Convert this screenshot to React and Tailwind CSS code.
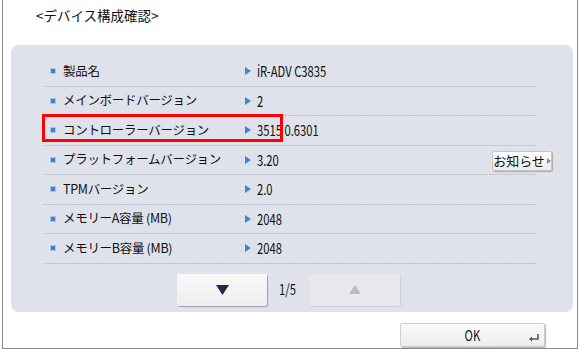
import React from 'react'

const ROWS = [
  { label: '製品名', value: 'iR-ADV C3835' },
  { label: 'メインボードバージョン', value: '2' },
  { label: 'コントローラーバージョン', value: '3515 0.6301' },
  { label: 'プラットフォームバージョン', value: '3.20', notice: true },
  { label: 'TPMバージョン', value: '2.0' },
  { label: 'メモリーA容量 (MB)', value: '2048' },
  { label: 'メモリーB容量 (MB)', value: '2048' },
]

const font = "font-['Noto_Sans_CJK_JP','Noto_Sans',sans-serif]"

// condensed latin text, like the panel's narrow face
const Narrow = ({ children, className = '' }) => (
  <span className={`inline-block origin-left scale-x-[0.75] whitespace-pre ${className}`}>{children}</span>
)

const InfoRow = ({ label, value, notice }) => (
  <div className="flex items-center h-[28.5px] box-content bg-[linear-gradient(to_right,#8f949c_1px,transparent_1px)] bg-[length:3px_1px] bg-repeat-x bg-bottom pb-px">
    <div className="flex items-center w-[202px] pl-[8px]">
      <span className="w-[4px] h-[4px] bg-[#3d7fd1] shadow-[0_0_0_1px_#a9c6ea]" />
      <span className="ml-[8px] text-[12.5px] tracking-[-0.3px] text-[#111]">{label}</span>
    </div>
    <svg width="6" height="8" viewBox="0 0 6 8" className="shrink-0">
      <path d="M0 0 L6 4 L0 8 Z" fill="#3e86d3" />
    </svg>
    <Narrow className="ml-[6px] text-[15px] leading-[18px] text-[#111]">{value}</Narrow>
    {notice && (
      <button className="ml-auto -mr-[15px] mt-[2px] h-[20px] w-[60px] flex items-center justify-center gap-[2px] bg-gradient-to-b from-[#ffffff] to-[#ececec] border border-[#c4c4c4] rounded-[2px] shadow-[1px_1px_1px_rgba(0,0,0,0.25)] text-[13px] leading-[16px] text-[#111]">
        お知らせ
        <svg width="4" height="6" viewBox="0 0 4 6">
          <path d="M0 0 L4 3 L0 6 Z" fill="#8a8a8a" />
        </svg>
      </button>
    )}
  </div>
)

export default function App() {
  return (
    <div className={`relative w-[578px] h-[352px] bg-white ${font}`}>
      <div className="ml-[2px] w-[576px] h-[349px] border-l border-r border-b border-[#8c8c8c] flex flex-col">
        <div className="pl-[33px] pt-[7px] h-[45px] text-[13.5px] leading-[16px] text-[#111]">
          &lt;デバイス構成確認&gt;
        </div>
        <div className="ml-[8px] mr-[4px] h-[267px] rounded-[8px] bg-[#dfe2ea] pt-[12px] px-[32px]">
          <div className="w-[494px]">
            {ROWS.map(r => (
              <InfoRow key={r.label} {...r} />
            ))}
          </div>
          <div className="flex items-center mt-[10px] ml-[134px]">
            <button className="w-[90px] h-[32px] flex items-center justify-center bg-gradient-to-b from-[#f8f8f8] to-[#ededed] rounded-[2px] shadow-[1px_1px_1px_rgba(0,0,0,0.3)]">
              <svg width="13" height="10" viewBox="0 0 13 10">
                <path d="M0 0 L13 0 L6.5 10 Z" fill="#1e2a45" />
              </svg>
            </button>
            <span className="ml-[12px] w-[30px] text-[15px] text-[#111]">
              <Narrow>1/5</Narrow>
            </span>
            <button className="w-[91px] h-[32px] flex items-center justify-center bg-[#e6e8ed] rounded-[2px] shadow-[1px_1px_1px_rgba(0,0,0,0.08)]">
              <svg width="12" height="9" viewBox="0 0 12 9">
                <path d="M6 0 L12 9 L0 9 Z" fill="#b9bcc3" />
              </svg>
            </button>
          </div>
        </div>
        <div className="mt-[11px] ml-[397px]">
          <button className="relative w-[145px] h-[24px] flex items-center justify-center bg-gradient-to-b from-[#fafafa] to-[#ededed] border border-[#cfcfcf] rounded-[2px] shadow-[1px_1px_1px_rgba(0,0,0,0.3)] text-[15px] text-[#111]">
            <span className="inline-block scale-x-[0.75]">OK</span>
            <svg width="10" height="8" viewBox="0 0 10 8" className="absolute right-[5px] bottom-[4px]">
              <path d="M9 0 V5 H2" stroke="#555" strokeWidth="1.6" fill="none" />
              <path d="M0 5 L3 2.5 L3 7.5 Z" fill="#555" />
            </svg>
          </button>
        </div>
      </div>
      <div className="absolute left-[42px] top-[114px] w-[241px] h-[28px] border-[3px] border-[#ff0000]" />
    </div>
  )
}
